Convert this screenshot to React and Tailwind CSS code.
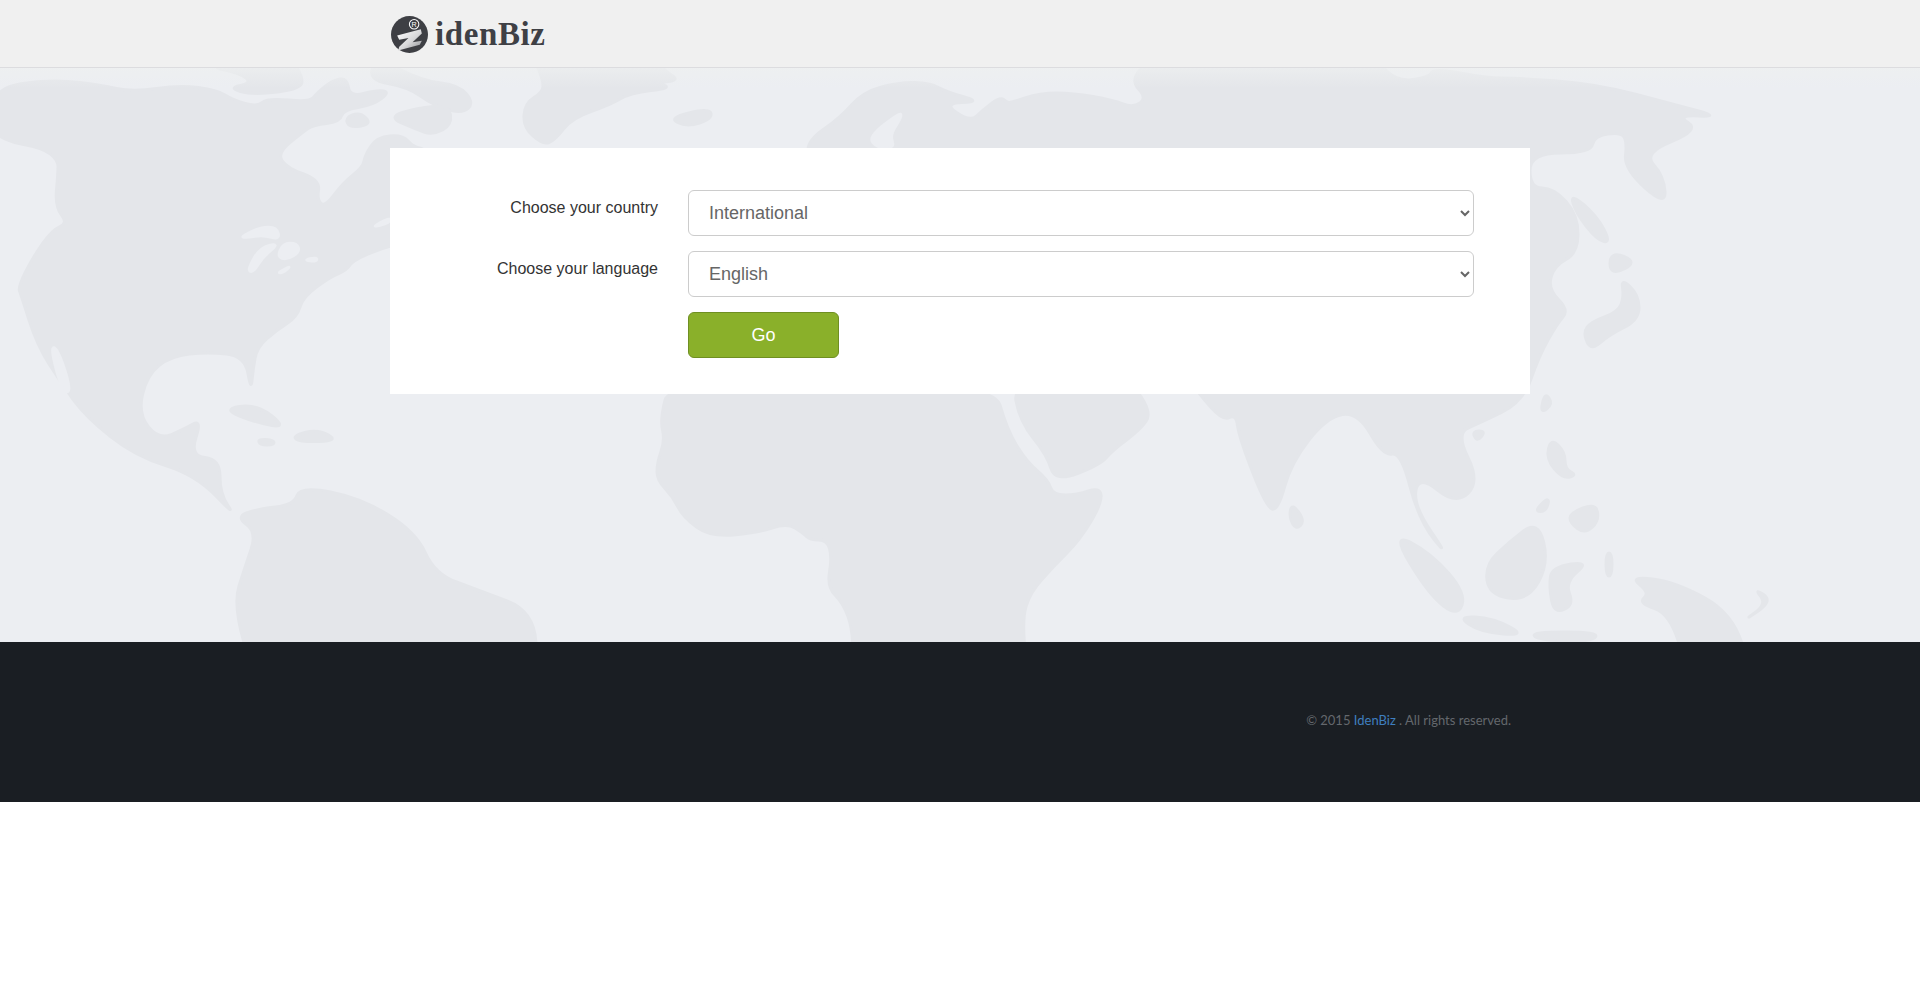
import React from 'react';

const LAND = [
  // north america
  '0,90 20,83 60,80 100,85 133,92 180,85 217,90 233,100 257,107 267,98 310,102 317,93 333,80 347,78 350,97 377,90 390,92 373,105 343,110 340,122 313,125 303,132 277,153 287,168 320,180 317,200 325,207 343,183 363,167 365,155 377,137 403,135 413,147 430,150 430,240 390,245 353,260 347,270 330,277 303,297 297,317 277,330 257,347 253,370 251,391 245,356 208,352 171,356 147,375 138,414 159,440 184,429 202,419 190,456 220,459 220,494 236,517 196,475 135,456 86,417 61,383 37,345 21,295 18,287 33,257 52,230 68,223 55,207 58,173 58,160 43,148 0,140 -20,115',
  // south america
  '236,517 257,532 245,567 233,605 255,680 536,680 536,612 478,590 435,574 416,532 361,498 300,486 294,505 257,509',
  // arctic islands, baffin
  '205,66 240,73 252,83 228,88 253,95 302,89 302,75 290,58',
  '368,80 377,58 423,81 459,85 474,103 462,114 433,105 408,87',
  '388,117 417,108 449,105 452,125 433,135 415,129',
  '345,118 360,112 372,124 350,128',
  // greenland, iceland
  '533,56 543,80 543,92 525,103 523,127 543,145 555,140 572,118 610,105 630,93 672,88 657,83 680,80 663,70 657,56',
  '668,118 710,108 712,119 687,127',
  // eurasia
  '808,160 808,140 840,118 863,92 900,82 930,83 947,92 982,102 943,103 970,122 983,110 1000,97 1007,102 1010,103 1040,93 1073,93 1113,100 1133,108 1147,98 1130,80 1153,56 1372,56 1397,82 1430,77 1433,68 1487,78 1517,78 1597,84 1676,105 1721,117 1676,115 1700,130 1643,153 1664,176 1666,207 1624,169 1627,142 1621,132 1594,136 1591,153 1530,153 1530,188 1554,188 1578,215 1578,253 1554,266 1548,289 1569,310 1557,324 1539,356 1523,402 1480,423 1456,433 1480,482 1456,505 1419,475 1413,505 1450,559 1419,521 1401,452 1383,456 1358,412 1327,417 1291,463 1278,511 1266,507 1239,437 1236,414 1223,421 1199,394 1190,380 1000,380 808,380',
  // arabia
  '1012,380 1020,422 1047,455 1055,482 1100,465 1113,450 1140,430 1152,413 1130,380',
  // africa
  '670,380 660,420 665,440 657,463 657,480 673,497 683,517 710,537 757,533 787,523 803,533 810,540 827,540 832,557 827,587 843,603 853,630 853,680 1028,680 1022,620 1030,593 1053,567 1080,540 1102,503 1100,487 1077,495 1053,495 1048,480 1027,462 1007,430 993,380',
  // caribbean
  '222,409 257,404 287,428 257,423',
  '292,436 318,429 339,441 300,442',
  '258,439 274,440 274,445 260,445',
  // east asia islands
  '1570,193 1597,216 1611,243 1597,240 1576,213',
  '1610,251 1638,262 1610,276',
  '1621,278 1639,295 1639,320 1609,335 1591,351 1583,333 1591,322 1618,312 1624,297',
  '1545,392 1553,404 1540,414',
  '1472,431 1486,431 1477,442',
  '1551,438 1565,452 1565,469 1577,475 1563,479 1546,459',
  '1534,511 1550,496 1546,512',
  '1570,513 1596,503 1599,521 1585,534 1570,523',
  '1485,565 1509,542 1538,520 1549,563 1528,601 1489,595',
  '1552,567 1590,561 1565,582 1574,605 1554,614 1549,586',
  '1391,532 1431,553 1466,593 1458,617 1429,595',
  '1457,616 1493,618 1527,636 1480,632',
  '1531,632 1599,632 1592,642 1538,640',
  '1629,576 1676,582 1734,614 1752,680 1689,680 1671,614 1638,603 1650,593',
  '1606,553 1612,553 1612,576 1606,576',
  '1742,622 1773,601 1754,588 1767,604',
  '1292,503 1305,521 1296,530 1289,517',
];

const WATER = [
  // baltic
  '900,112 868,137 877,148 895,148 890,135 902,117',
  // great lakes
  '240,237 260,227 277,227 280,240 263,235 247,238',
  '247,270 260,247 280,243 263,257 253,273',
  '277,257 283,243 297,243 300,252 287,260',
  '277,273 292,265 283,273',
  '303,260 317,257 317,262',
  // gulf of california
  '50,347 58,348 72,392 62,392',
  '370,228 390,217 390,223',
];

// rounds the corners: runs through the edge midpoints with the vertex as control point
const smooth = (points) => {
  const pts = points.split(' ').map((p) => p.split(',').map(Number));
  const mid = (a, b) => [(a[0] + b[0]) / 2, (a[1] + b[1]) / 2];
  const start = mid(pts[pts.length - 1], pts[0]);
  let d = `M${start[0]} ${start[1]}`;
  pts.forEach((p, i) => {
    const m = mid(p, pts[(i + 1) % pts.length]);
    d += ` Q${p[0]} ${p[1]} ${m[0]} ${m[1]}`;
  });
  return d + ' Z';
};

const WorldMap = () => (
  <svg
    className="absolute inset-0 w-full h-full blur-[0.5px]"
    viewBox="0 68 1920 574"
    preserveAspectRatio="none"
  >
    {LAND.map((points, i) => (
      <path key={i} d={smooth(points)} fill="#e4e6ea" stroke="#e4e6ea" strokeWidth="3" strokeLinejoin="round" />
    ))}
    {WATER.map((points, i) => (
      <path key={i} d={smooth(points)} fill="#eceef2" stroke="#eceef2" strokeWidth="2.5" strokeLinejoin="round" />
    ))}
  </svg>
);

const LogoMark = () => (
  <svg width="37" height="37" viewBox="0 0 36 36" className="shrink-0">
    <defs>
      <linearGradient id="zfill" x1="0" y1="0" x2="1" y2="1">
        <stop offset="0" stopColor="#ffffff" />
        <stop offset="0.55" stopColor="#d8d8da" />
        <stop offset="1" stopColor="#8d8e92" />
      </linearGradient>
    </defs>
    <circle cx="18" cy="18" r="18" fill="#3e3f44" />
    <path d="M6 19 L29 13 L30 17 L21 25.5 L30 24 L28 28 L7 33.5 L8 30 L17 21.5 L8 23 Z" fill="url(#zfill)" />
    <circle cx="22.5" cy="8" r="4.6" fill="none" stroke="#fff" strokeWidth="1" />
    <text x="22.5" y="10.6" textAnchor="middle" fontSize="7" fontFamily="Liberation Sans, sans-serif" fill="#fff">R</text>
  </svg>
);

const Field = ({ label, value, options }) => (
  <div className="flex gap-[30px]">
    <label className="w-[268px] pt-[7px] text-right text-base leading-[22px] text-[#333]">{label}</label>
    <select
      defaultValue={value}
      className="w-[786px] h-[46px] px-4 bg-white border border-[#ccc] rounded-md text-lg text-[#666]"
    >
      {options.map((o) => (
        <option key={o}>{o}</option>
      ))}
    </select>
  </div>
);

export default function App() {
  return (
    <div className="font-['Liberation_Sans',Arial,sans-serif]">
      <header className="h-[68px] bg-[#f0f0f0] border-b border-[#dcdcdf]">
        <div className="w-[1140px] mx-auto flex items-center h-full gap-[7px] pl-[1px] pt-[1px]">
          <LogoMark />
          <span className="font-['Liberation_Serif',serif] font-bold text-[33px] leading-none tracking-[0.6px] text-[#3f4045]">
            idenBiz
          </span>
        </div>
      </header>

      <main className="relative h-[574px] bg-[#eceef2] pt-20 overflow-hidden">
        <WorldMap />
        <div className="absolute inset-x-0 top-0 h-5 bg-gradient-to-b from-[#eef0f0]/70 to-transparent" />
        <div className="relative w-[1140px] h-[246px] mx-auto bg-white pt-[42px] flex flex-col gap-[15px]">
          <Field label="Choose your country" value="International" options={['International']} />
          <Field label="Choose your language" value="English" options={['English']} />
          <div className="pl-[298px]">
            <button className="w-[151px] h-[46px] bg-[#8ab02a] border border-[#6f8f22] rounded-md text-lg text-white">
              Go
            </button>
          </div>
        </div>
      </main>

      <footer className="h-40 bg-[#1a1e23]">
        <div className="w-[1140px] mx-auto pt-[70px] pr-[19px] text-right font-['Lato',sans-serif] text-[13px] leading-4 text-[#64686d]">
          © 2015 <a className="text-[#3f7fbf]">IdenBiz</a> . All rights reserved.
        </div>
      </footer>
    </div>
  );
}
